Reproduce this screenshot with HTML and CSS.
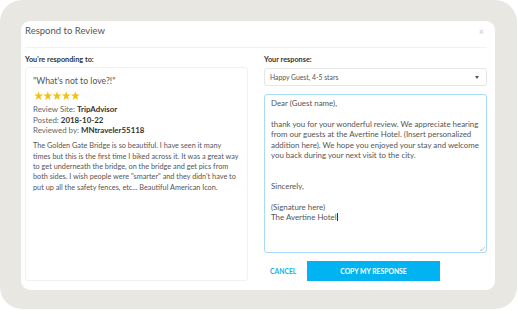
FILE: index.html
```html
<!DOCTYPE html>
<html lang="en">
<head>
  <meta charset="UTF-8" />
  <title>Respond to Review</title>
  <link rel="stylesheet" href="styles.css">
</head>
<body>
  <div class="backdrop">
    <div class="modal">
      <div class="modal-header">
        <h2>Respond to Review</h2>
        <span class="close">&times;</span>
      </div>
      <div class="modal-body">
        <div class="column">
          <h4>You're responding to:</h4>
          <div class="review">
            <p class="quote">"What's not to love?!"</p>
            <svg class="stars" width="46" height="10" viewBox="0 0 46 10">
              <defs>
                <polygon id="star" points="4.6,0.2 5.7,3.4 9,3.5 6.4,5.6 7.3,8.9 4.6,7 1.9,8.9 2.8,5.6 0.2,3.5 3.5,3.4" />
              </defs>
              <use href="#star" x="0" />
              <use href="#star" x="9.2" />
              <use href="#star" x="18.4" />
              <use href="#star" x="27.6" />
              <use href="#star" x="36.8" />
            </svg>
            <p class="meta">Review Site: <b>TripAdvisor</b></p>
            <p class="meta">Posted: <b>2018-10-22</b></p>
            <p class="meta">Reviewed by: <b>MNtraveler55118</b></p>
            <p class="text">The Golden Gate Bridge is so beautiful. I have seen it many<br>times but this is the first time I biked across it. It was a great way<br>to get underneath the bridge, on the bridge and get pics from<br>both sides. I wish people were "smarter" and they didn't have to<br>put up all the safety fences, etc... Beautiful American Icon.</p>
          </div>
        </div>
        <div class="column">
          <h4>Your response:</h4>
          <div class="select">
            <span>Happy Guest, 4-5 stars</span>
            <span class="caret"></span>
          </div>
          <div class="response">Dear (Guest name),<br><br>thank you for your wonderful review. We appreciate hearing<br>from our guests at the Avertine Hotel. (Insert personalized<br>addition here). We hope you enjoyed your stay and welcome<br>you back during your next visit to the city.<br><br><br>Sincerely,<br><br>(Signature here)<br>The Avertine Hotel<span class="cursor"></span><span class="grip"></span></div>
          <div class="actions">
            <button class="cancel">CANCEL</button>
            <button class="copy">COPY MY RESPONSE</button>
          </div>
        </div>
      </div>
    </div>
  </div>
</body>
</html>
```
FILE: styles.css
```css
* {
  margin: 0;
  padding: 0;
  box-sizing: border-box;
  font-family: 'Lato', 'Liberation Sans', sans-serif;
}

body {
  background: #fff;
  width: 518px;
  height: 314px;
}

.backdrop {
  width: 517px;
  height: 309px;
  background: #e8e7e2;
  border-radius: 22px;
  padding: 21px 0 0 21px;
}

.modal {
  width: 474px;
  height: 269px;
  background: #fff;
  border-radius: 9px;
  padding: 0 8px 0 4px;
}

.modal-header {
  height: 27px;
  display: flex;
  justify-content: space-between;
  align-items: flex-start;
  border-bottom: 1px solid #f2f2f2;
  padding-top: 4px;
}

.modal-header h2 {
  font-size: 9.5px;
  line-height: 12px;
  font-weight: 400;
  color: #555;
}

.close {
  color: #c9c9c9;
  font-size: 9px;
  line-height: 9px;
  margin-top: 2px;
  margin-right: 3px;
}

.modal-body {
  display: flex;
  gap: 16px;
  padding-top: 7px;
}

.column {
  width: 223px;
  height: 226px;
  display: flex;
  flex-direction: column;
}

.column h4 {
  font-size: 7.3px;
  font-weight: 700;
  color: #333;
  line-height: 10px;
  margin-bottom: 2px;
}

.review {
  flex: 1;
  border: 1px solid #f1f1f1;
  border-radius: 3px;
  padding: 7px 2px 0 7px;
  color: #555;
}

.quote {
  font-size: 8.7px;
  line-height: 12px;
  margin-bottom: 4px;
}

.stars {
  display: block;
  fill: #f3c10f;
  margin: 0 0 3px 1px;
}

.meta {
  font-size: 7.9px;
  line-height: 10.7px;
  color: #666;
}

.meta b {
  color: #333;
}

.text {
  font-size: 7.3px;
  line-height: 10.4px;
  margin-top: 5px;
  color: #555;
}

.select {
  flex-shrink: 0;
  height: 18px;
  margin-top: 1px;
  border: 1px solid #e6e6e6;
  border-radius: 3px;
  display: flex;
  justify-content: space-between;
  align-items: center;
  padding: 0 7px 0 5px;
  font-size: 6.8px;
  color: #555;
  margin-bottom: 8px;
}

.caret {
  width: 0;
  height: 0;
  border-left: 2.5px solid transparent;
  border-right: 2.5px solid transparent;
  border-top: 3px solid #555;
}

.response {
  position: relative;
  flex-shrink: 0;
  height: 159px;
  border: 1px solid #a9dbf6;
  border-radius: 3px;
  padding: 3px 5px 0 6px;
  font-size: 7.9px;
  line-height: 10.4px;
  color: #555;
}

.cursor {
  display: inline-block;
  width: 1px;
  height: 8px;
  background: #333;
  vertical-align: -1px;
}

.grip {
  position: absolute;
  right: 1px;
  bottom: 1px;
  width: 5px;
  height: 5px;
  background: linear-gradient(135deg, transparent 50%, #ccc 50%, #ccc 62%, transparent 62%);
}

.actions {
  display: flex;
  align-items: center;
  margin-top: 8px;
  gap: 10px;
}

.actions button {
  border: none;
  font-size: 6.8px;
  font-weight: 700;
  cursor: pointer;
}

.cancel {
  background: none;
  color: #17b1ec;
  padding: 0 0 0 6px;
  width: 33px;
  text-align: left;
}

.copy {
  width: 133px;
  height: 20px;
  background: #01b4f1;
  color: #fff;
}
```
